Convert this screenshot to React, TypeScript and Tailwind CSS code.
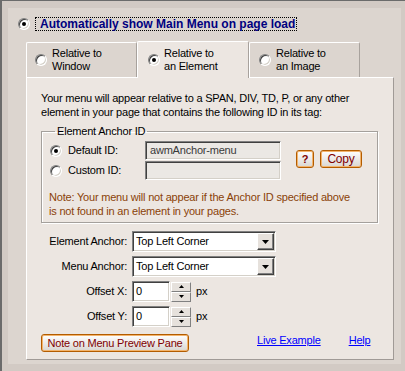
import React from "react";

function Radio({ checked }: { checked?: boolean }) {
  return (
    <span className="relative inline-block w-[12px] h-[12px] shrink-0 rounded-full bg-white border border-t-[#808080] border-l-[#808080] border-b-white border-r-white shadow-[inset_1px_1px_0_#404040,inset_-1px_-1px_0_#d4d0c8]">
      {checked && (
        <span className="absolute left-[3px] top-[3px] w-[4px] h-[4px] rounded-full bg-black" />
      )}
    </span>
  );
}

function DropArrow() {
  return (
    <svg width="7" height="4" viewBox="0 0 7 4">
      <path d="M0 0H7L3.5 4Z" fill="#000" />
    </svg>
  );
}

function Select({ value }: { value: string }) {
  return (
    <div className="w-[144px] h-[21px] flex items-center bg-white border border-t-[#808080] border-l-[#808080] border-b-white border-r-white shadow-[inset_1px_1px_0_#404040,inset_-1px_-1px_0_#d4d0c8] p-[1px]">
      <span className="flex-1 pl-[2px] text-black">{value}</span>
      <span className="w-[17px] h-[17px] flex items-center justify-center bg-[#e6e1dc] border border-t-white border-l-white border-b-[#404040] border-r-[#404040] shadow-[inset_-1px_-1px_0_#808080]">
        <DropArrow />
      </span>
    </div>
  );
}

function SpinBtn({ up }: { up?: boolean }) {
  return (
    <span className="h-[10px] w-[20px] flex items-center justify-center bg-[#e6e1dc] border border-t-white border-l-white border-b-[#808080] border-r-[#808080]">
      <svg width="5" height="3" viewBox="0 0 5 3">
        {up ? <path d="M2.5 0L5 3H0Z" fill="#000" /> : <path d="M0 0H5L2.5 3Z" fill="#000" />}
      </svg>
    </span>
  );
}

function Spinner({ label }: { label: string }) {
  return (
    <div className="flex items-center h-[21px]">
      <span className="w-[86px] text-right">{label}</span>
      <div className="ml-[5px] w-[38px] h-[21px] bg-white border border-t-[#808080] border-l-[#808080] border-b-white border-r-white shadow-[inset_1px_1px_0_#404040,inset_-1px_-1px_0_#d4d0c8] pl-[3px] flex items-center text-black">
        0
      </div>
      <div className="ml-[1px] flex flex-col">
        <SpinBtn up />
        <SpinBtn />
      </div>
      <span className="ml-[5px]">px</span>
    </div>
  );
}

function OrangeButton({ children, className }: { children: React.ReactNode; className?: string }) {
  return (
    <button className={"flex items-center justify-center rounded-[3px] border border-[#b35c00] bg-linear-to-b from-white to-[#d9d6d2] shadow-[inset_0_0_0_1px_#f3b46c] text-[#800000] leading-none " + (className ?? "")}>
      {children}
    </button>
  );
}

export default function App() {
  return (
    <div className="w-[405px] h-[371px] overflow-hidden bg-[#d2cac4] border-t border-t-[#6b6b6b] border-l-2 border-l-[#6b6b6b] pt-[7px] pl-[6px] font-['Liberation_Sans',Arial,sans-serif] text-[11px] tracking-[-0.2px] text-black">
      <div className="w-[393px] h-[356px] bg-[#dcd5cf] pt-[9px] pl-[10px] flex flex-col">
        {/* Title row */}
        <div className="flex items-center h-[14px]">
          <Radio checked />
          <span className="ml-[5px] h-[14px] flex items-center border border-dotted border-black pl-[4px] pr-[1px] text-[12px] font-bold tracking-normal text-[#000080] leading-none">
            Automatically show Main Menu on page load
          </span>
        </div>

        {/* Tabs */}
        <div className="ml-[8px] mt-[10px] flex items-end">
          <div className="w-[111px] h-[35px] flex items-center pl-[8px] border-t border-l border-r border-t-white border-l-white border-r-[#a8a29d] rounded-t-[2px] bg-[#dcd5cf]">
            <Radio />
            <span className="ml-[5px] leading-[13px]">
              Relative to
              <br />
              Window
            </span>
          </div>
          <div className="relative z-10 -mb-px w-[112px] h-[37px] flex items-center pl-[10px] border-t border-l border-r border-t-white border-l-white border-r-[#a8a29d] rounded-t-[2px] bg-[#ece6e1]">
            <Radio checked />
            <span className="ml-[4px] leading-[13px]">
              Relative to
              <br />
              an Element
            </span>
          </div>
          <div className="w-[111px] h-[35px] flex items-center pl-[9px] border-t border-l border-r border-t-white border-l-white border-r-[#a8a29d] rounded-t-[2px] bg-[#dcd5cf]">
            <Radio />
            <span className="ml-[5px] leading-[13px]">
              Relative to
              <br />
              an Image
            </span>
          </div>
        </div>

        {/* Tab content */}
        <div className="ml-[8px] w-[368px] h-[283px] bg-[#ece6e1] border border-t-white border-l-white border-r-[#a09a96] border-b-[#a09a96] pt-[13px] px-[14px] flex flex-col">
          <p className="leading-[14px]">
            Your menu will appear relative to a SPAN, DIV, TD, P, or any other
            <br />
            element in your page that contains the following ID in its tag:
          </p>

          <fieldset className="mt-[6px] w-[337px] border border-[#a4a09c] pl-[8px] pb-[4px] shadow-[1px_1px_0_#fff,inset_1px_1px_0_#fff]">
            <legend className="ml-[5px] px-[2px] leading-[13px]">Element Anchor ID</legend>
            <div className="mt-[3px] flex items-center">
              <div className="flex flex-col gap-[1px]">
                <div className="flex items-center h-[19px]">
                  <Radio checked />
                  <span className="ml-[6px] w-[77px]">Default ID:</span>
                  <div className="w-[136px] h-[19px] bg-[#ebe8e4] border border-t-[#808080] border-l-[#808080] border-b-white border-r-white shadow-[inset_1px_1px_0_#404040,inset_-1px_-1px_0_#d4d0c8] pl-[4px] flex items-center text-[#3a3a3a]">
                    awmAnchor-menu
                  </div>
                </div>
                <div className="flex items-center h-[19px]">
                  <Radio />
                  <span className="ml-[6px] w-[77px]">Custom ID:</span>
                  <div className="w-[136px] h-[19px] bg-[#ebe8e4] border border-t-[#808080] border-l-[#808080] border-b-white border-r-white shadow-[inset_1px_1px_0_#404040,inset_-1px_-1px_0_#d4d0c8]" />
                </div>
              </div>
              <div className="ml-[15px] mb-[3px] flex items-center">
                <OrangeButton className="w-[18px] h-[18px] font-bold">?</OrangeButton>
                <OrangeButton className="ml-[6px] w-[42px] h-[18px] text-[12px]">Copy</OrangeButton>
              </div>
            </div>
            <p className="mt-[10px] -ml-[1px] leading-[14px] text-[#8a4208]">
              Note: Your menu will not appear if the Anchor ID specified above
              <br />
              is not found in an element in your pages.
            </p>
          </fieldset>

          <div className="mt-[8px] flex flex-col gap-[4px]">
            <div className="flex items-center h-[21px]">
              <span className="w-[86px] text-right">Element Anchor:</span>
              <div className="ml-[5px]">
                <Select value="Top Left Corner" />
              </div>
            </div>
            <div className="flex items-center h-[21px]">
              <span className="w-[86px] text-right">Menu Anchor:</span>
              <div className="ml-[5px]">
                <Select value="Top Left Corner" />
              </div>
            </div>
            <Spinner label="Offset X:" />
            <Spinner label="Offset Y:" />
          </div>

          <div className="mt-[7px] flex items-start">
            <OrangeButton className="w-[148px] h-[18px]">Note on Menu Preview Pane</OrangeButton>
            <a href="#" className="-mt-px ml-[68px] leading-[14px] text-[#0000ff] underline">
              Live Example
            </a>
            <a href="#" className="-mt-px ml-[28px] leading-[14px] text-[#0000ff] underline">
              Help
            </a>
          </div>
        </div>
      </div>
    </div>
  );
}
